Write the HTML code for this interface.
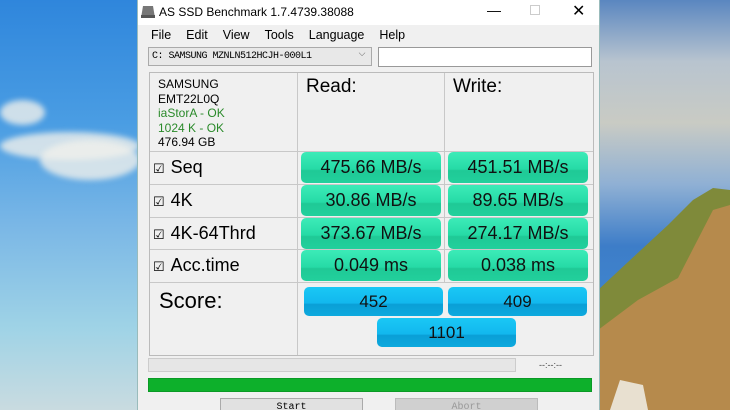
<!DOCTYPE html>
<html style="width:730px;height:410px;overflow:hidden"><head><meta charset="utf-8"><style>
*{margin:0;padding:0;box-sizing:border-box}
body{width:730px;height:410px;overflow:hidden;position:relative;font-family:"Liberation Sans",Arial,sans-serif;background:#4a9be0}
.bgl{position:absolute;left:0;top:0;width:140px;height:410px;background:linear-gradient(180deg,#2f86dc 0%,#4a9de3 30%,#7ab7e6 55%,#9fd3e6 80%,#c9dbe0 100%)}
.cloud{position:absolute;border-radius:50%;background:rgba(240,240,235,.8);filter:blur(3px)}
.bgr{position:absolute;left:598px;top:0;width:132px;height:410px;background:linear-gradient(180deg,#5a86c0 0%,#b8c4cf 15%,#c9cbc4 30%,#8fb0d4 45%,#3d7dc8 60%,#3f86cf 75%,#4a90d2 100%)}
.win{position:absolute;left:137px;top:0;width:463px;height:410px;background:#f0f0f0;border-left:1px solid #9bb;border-right:1px solid #9bb}
.title{height:25px;background:#fff;font-size:12px;color:#000;position:relative}
.title span{position:absolute;left:21px;top:5px}
.menu{position:absolute;top:28px;left:13px;font-size:12.5px}
.menu b{font-weight:normal;margin-right:15px}
.combo{position:absolute;left:10px;top:47px;width:224px;height:19px;border:1px solid #aaa;background:#e8e8e8;font-family:"Liberation Mono",monospace;font-size:10px;padding:3px 0 0 3px;letter-spacing:-0.5px}
.tb{position:absolute;left:240px;top:47px;width:214px;height:20px;border:1px solid #999;background:#fff}
.grid{position:absolute;left:11px;top:72px;width:445px;height:284px;border:1px solid #bbb}
.v{position:absolute;background:#c8c8c8;width:1px}
.h{position:absolute;background:#c8c8c8;height:1px;left:0;width:443px}
.lab{position:absolute;left:3px;font-size:18px}
.lab i{font-style:normal;font-size:13px;margin-right:6px}
.g{position:absolute;width:140px;height:31px;border-radius:5px;background:linear-gradient(180deg,#3cebb8 0%,#26dba6 55%,#1fc996 60%,#22d09c 100%);font-size:18px;text-align:center;line-height:31px;color:#111}
.s{position:absolute;width:139px;height:29px;border-radius:5px;background:linear-gradient(180deg,#1ac8f5 0%,#12b8ee 55%,#0a9fd6 60%,#0da9de 100%);font-size:17px;text-align:center;line-height:29px;color:#111}
.info{position:absolute;left:8px;top:4px;font-size:12px;line-height:14.5px}
</style></head><body>
<div class="bgl"></div>
<div class="cloud" style="left:0;top:100px;width:45px;height:25px"></div>
<div class="cloud" style="left:0;top:132px;width:140px;height:28px"></div>
<div class="cloud" style="left:40px;top:140px;width:100px;height:40px"></div>
<div class="bgr"></div>
<svg style="position:absolute;left:598px;top:0" width="132" height="410"><polygon points="0,290 30,262 70,225 95,200 115,188 132,190 132,410 0,410" fill="#7f8a3a"/><polygon points="0,330 40,300 80,278 115,210 132,205 132,410 0,410" fill="#b68a4c"/><polygon points="12,410 22,380 45,385 50,410" fill="#e8e0d0"/></svg>
<div class="win">
<div class="title"><svg style="position:absolute;left:3px;top:6px" width="14" height="12"><polygon points="2,0 12,0 14,12 0,12" fill="#777"/><rect x="0" y="9" width="14" height="3" fill="#555"/></svg><span>AS SSD Benchmark 1.7.4739.38088</span>
<span style="left:349px;top:2px;font-size:14px">—</span>
<span style="left:392px;top:5px;width:10px;height:10px;border:1px solid #ccc"></span>
<span style="left:434px;top:1px;font-size:16px">✕</span></div>
<div class="menu"><b>File</b><b>Edit</b><b>View</b><b>Tools</b><b>Language</b><b>Help</b></div>
<div class="combo">C: SAMSUNG MZNLN512HCJH-000L1<span style="position:absolute;right:6px;top:1px;font-size:9px;color:#555">⌵</span></div>
<div class="tb"></div>
<div class="grid">
<div class="v" style="left:147px;top:0;height:282px"></div>
<div class="v" style="left:294px;top:0;height:210px"></div>
<div class="h" style="top:78px"></div><div class="h" style="top:111px"></div><div class="h" style="top:144px"></div><div class="h" style="top:176px"></div><div class="h" style="top:209px"></div>
<div class="info">SAMSUNG<br>EMT22L0Q<br><span style="color:#2a8a2a">iaStorA - OK<br>1024 K - OK</span><br>476.94 GB</div>
<div style="position:absolute;left:156px;top:3px;font-size:19px">Read:</div>
<div style="position:absolute;left:303px;top:3px;font-size:19px">Write:</div>
<div class="lab" style="top:84px"><i>☑</i>Seq</div>
<div class="lab" style="top:117px"><i>☑</i>4K</div>
<div class="lab" style="top:150px"><i>☑</i>4K-64Thrd</div>
<div class="lab" style="top:182px"><i>☑</i>Acc.time</div>
<div class="g" style="left:151px;top:79px">475.66 MB/s</div><div class="g" style="left:298px;top:79px">451.51 MB/s</div>
<div class="g" style="left:151px;top:112px">30.86 MB/s</div><div class="g" style="left:298px;top:112px">89.65 MB/s</div>
<div class="g" style="left:151px;top:145px">373.67 MB/s</div><div class="g" style="left:298px;top:145px">274.17 MB/s</div>
<div class="g" style="left:151px;top:177px">0.049 ms</div><div class="g" style="left:298px;top:177px">0.038 ms</div>
<div style="position:absolute;left:9px;top:215px;font-size:22px">Score:</div>
<div class="s" style="left:154px;top:214px">452</div><div class="s" style="left:298px;top:214px">409</div>
<div class="s" style="left:227px;top:245px">1101</div>
</div>
<div style="position:absolute;left:10px;top:358px;width:368px;height:14px;border:1px solid #ccc;background:#e6e6e6"></div>
<div style="position:absolute;left:401px;top:360px;font-size:9px;color:#444">--:--:--</div>
<div style="position:absolute;left:10px;top:378px;width:444px;height:14px;background:#0db02b;border:1px solid #0a9a25"></div>
<div style="position:absolute;left:82px;top:398px;width:143px;height:14px;border:1px solid #aaa;background:#e1e1e1;font-family:'Liberation Mono',monospace;font-size:10px;text-align:center;line-height:18px">Start</div>
<div style="position:absolute;left:257px;top:398px;width:143px;height:14px;border:1px solid #bbb;background:#d0d0d0;color:#999;font-family:'Liberation Mono',monospace;font-size:10px;text-align:center;line-height:18px">Abort</div>
</div>
</body></html>
